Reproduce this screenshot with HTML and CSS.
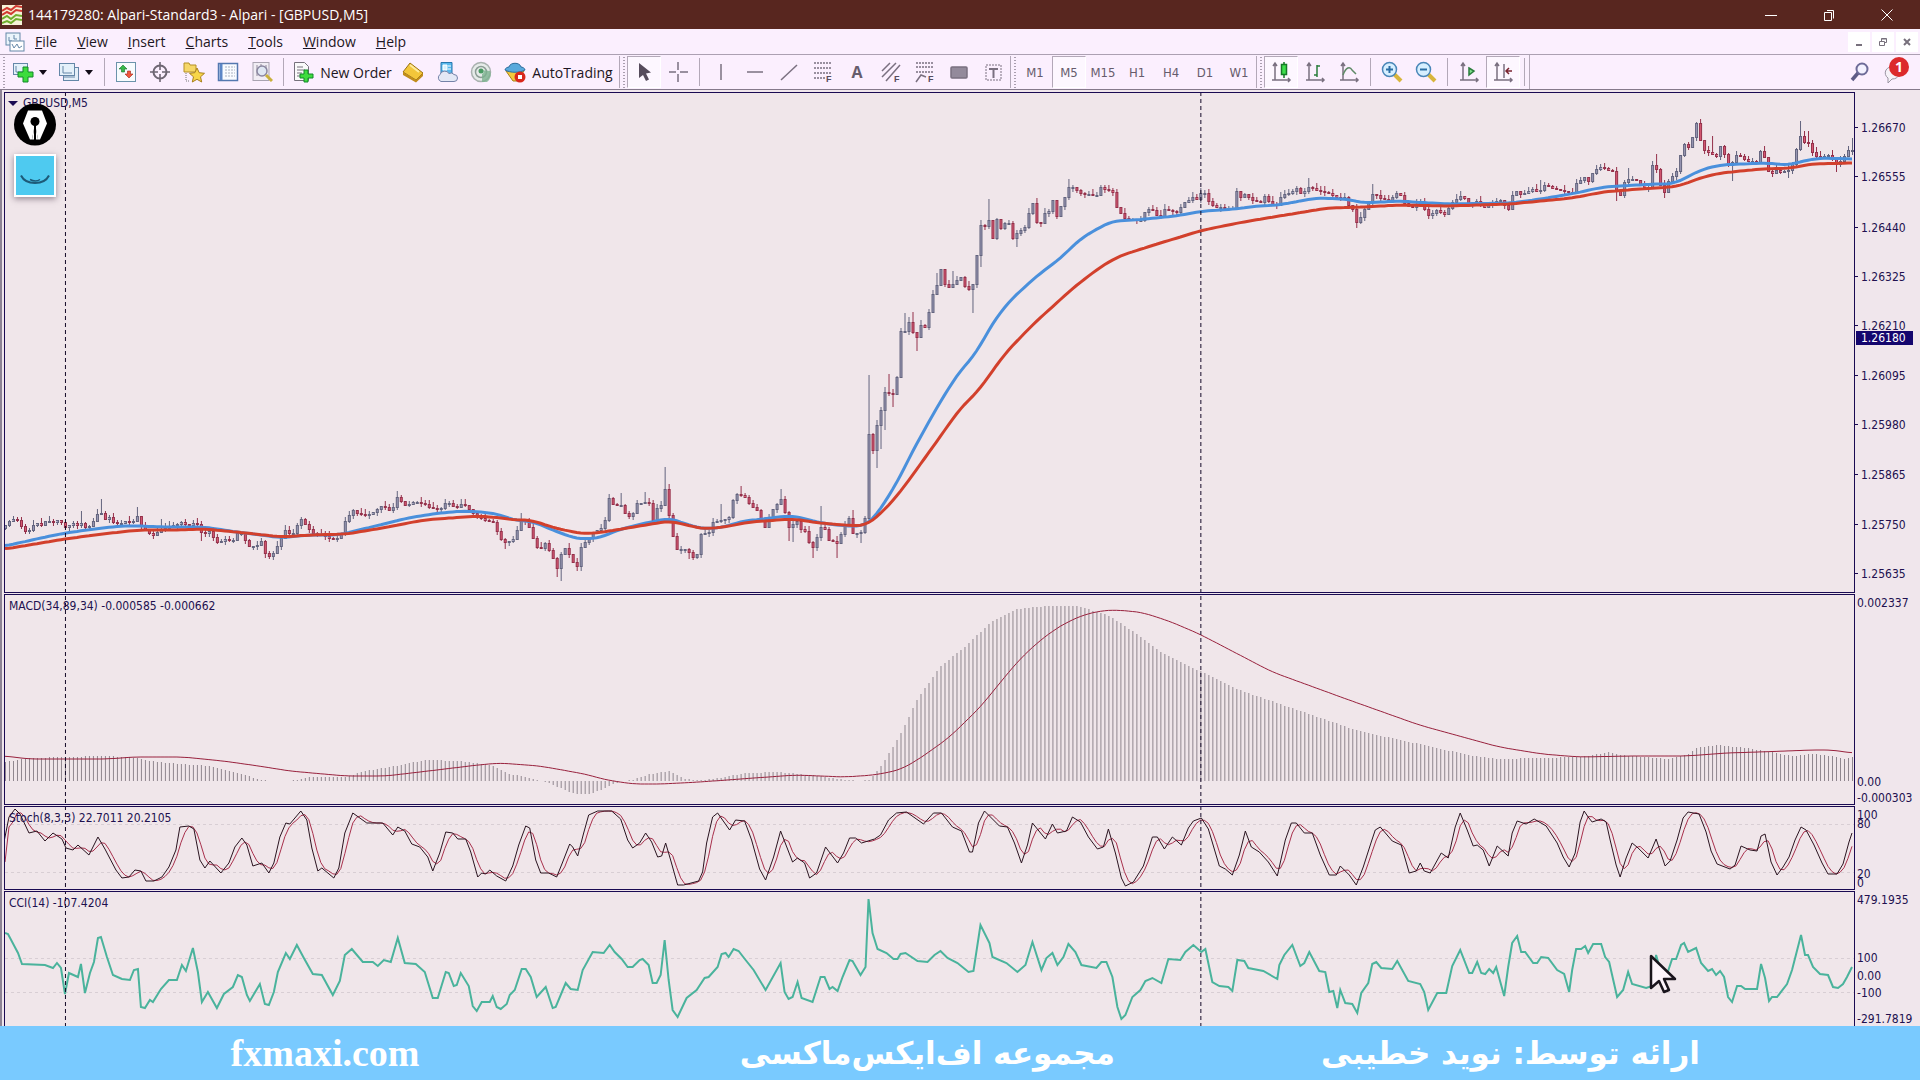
FILE: index.html
```html
<!DOCTYPE html>
<html lang="en">
<head>
    <meta charset="UTF-8">
    <meta name="viewport" content="width=device-width, initial-scale=1.0">
    <title>144179280: Alpari-Standard3 - Alpari - [GBPUSD,M5]</title>
    <link rel="stylesheet" href="styles.css">
</head>
<body>
    <header class="titlebar">
        <svg class="app-icon" viewBox="0 0 20 20"><rect width="20" height="20" fill="#f6f3d8"/><path d="M0 6l5-3 4 2 5-4 6 1M0 10l5-3 4 2 5-4 6 1" stroke="#d23a32" stroke-width="2" fill="none"/><path d="M0 14l5-3 4 3 5-4 6 1M0 18l5-2 4 2 5-4 6 1" stroke="#6fae2c" stroke-width="2" fill="none"/></svg>
        <h1>144179280: Alpari-Standard3 - Alpari - [GBPUSD,M5]</h1>
        <div class="win-btns">
            <button aria-label="Minimize"><svg viewBox="0 0 14 14"><path d="M1 7.500h12"/></svg></button>
            <button aria-label="Restore"><svg viewBox="0 0 14 14"><path d="M2.500 4.500h7v8h-7zM5 2.500h6.500v8"/></svg></button>
            <button aria-label="Close"><svg viewBox="0 0 14 14"><path d="M1.500 1.500l11 11M12.500 1.500l-11 11"/></svg></button>
        </div>
    </header>

    <nav class="menubar">
        <svg class="menu-icon" viewBox="0 0 20 20"><rect x="1" y="1" width="14" height="12" fill="#eaf4fb" stroke="#6487a8"/><path d="M4 5v4h3M9 3v4h3" stroke="#6487a8" fill="none"/><rect x="5" y="9" width="14" height="10" fill="#fff" stroke="#6487a8"/><path d="M7 12l2 4 3-4 2 4 3-2" stroke="#6487a8" fill="none"/></svg>
        <button><u>F</u>ile</button>
        <button><u>V</u>iew</button>
        <button><u>I</u>nsert</button>
        <button><u>C</u>harts</button>
        <button><u>T</u>ools</button>
        <button><u>W</u>indow</button>
        <button><u>H</u>elp</button>
        <div class="mdi-btns">
            <button aria-label="Minimize chart"><svg viewBox="0 0 10 10"><path d="M2 8h6" stroke-width="2"/></svg></button>
            <button aria-label="Restore chart"><svg viewBox="0 0 10 10"><path d="M1.500 4.500h5v4h-5zM3.500 4V1.500h5v4H7M3.500 2h5"/></svg></button>
            <button aria-label="Close chart"><svg viewBox="0 0 10 10"><path d="M2 2l6 6M8 2l-6 6" stroke-width="2"/></svg></button>
        </div>
    </nav>

    <div class="toolbar">
        <span class="grip first"></span>
        <button class="tool drop" aria-label="New chart"><svg viewBox="0 0 22 22"><rect x="1.500" y="2.500" width="14" height="11" fill="#e4f1fa" stroke="#6487a8"/><path d="M4 5v6h8" stroke="#6487a8" fill="none"/><path d="M11 6h5v5h5v5h-5v5h-5v-5H6v-5h5z" fill="#3ddc3d" stroke="#12882a"/></svg><i class="caret"></i></button>
        <button class="tool drop" aria-label="Profiles"><svg viewBox="0 0 22 22"><rect x="5.500" y="6.500" width="15" height="13" fill="#e4eff8" stroke="#6487a8"/><rect x="1.500" y="2.500" width="15" height="12" fill="#e4f1fa" stroke="#6487a8"/><path d="M5 5v7h9M6 16h11" stroke="#6487a8" fill="none"/></svg><i class="caret"></i></button>
        <span class="sep"></span>
        <button class="tool" aria-label="Market Watch"><svg viewBox="0 0 22 22"><rect x="1.500" y="1.500" width="19" height="19" fill="#f7fbfd" stroke="#6c93ab"/><path d="M8 4l4 4H9.500v3h-3V8H4z" fill="#37b84a" stroke="#17702a" stroke-width=".6"/><path d="M14 17l-4-4h2.500v-3h3v3H18z" fill="#f0573d" stroke="#a12418" stroke-width=".6"/></svg></button>
        <button class="tool" aria-label="Data Window"><svg viewBox="0 0 22 22"><circle cx="11" cy="11" r="6.500" fill="none" stroke="#6e6773" stroke-width="2"/><path d="M11 1v8M11 13v8M1 11h8M13 11h8" stroke="#6e6773" stroke-width="1.600"/></svg></button>
        <button class="tool" aria-label="Navigator"><svg viewBox="0 0 22 22"><path d="M1 2h5l1 2h6v7H1z" fill="#f6d768" stroke="#b38f27"/><path d="M3 12v8h4" stroke="#777" stroke-dasharray="1 1" fill="none"/><path d="M14 7l2.200 4.700 5.300.6-4 3.500 1.200 5.200-4.700-2.700L9.300 21l1.200-5.200-4-3.500 5.300-.6z" fill="#f8d648" stroke="#a8801c"/></svg></button>
        <button class="tool" aria-label="Terminal"><svg viewBox="0 0 22 22"><rect x="1.500" y="2.500" width="19" height="17" fill="#f8fbff" stroke="#5478b0" stroke-width="1.500"/><path d="M4 3v16" stroke="#5b86c6" stroke-width="3"/><path d="M8 6h10M8 9h10M8 12h10M8 15h10" stroke="#aab2c0" stroke-dasharray="2 1"/></svg></button>
        <button class="tool" aria-label="Strategy Tester"><svg viewBox="0 0 22 22"><rect x="2" y="1.500" width="16" height="18" fill="#f1edf4" stroke="#a9a3b1"/><path d="M6 4v11M10 3v5M15 4v6" stroke="#928c9b"/><circle cx="11" cy="10" r="5" fill="#dfe7f3" stroke="#8a86a0" stroke-width="1.500"/><path d="M15 14l6 6" stroke="#c9b03a" stroke-width="3"/></svg></button>
        <span class="sep"></span>
        <button class="tool wide order"><svg viewBox="0 0 22 22"><path d="M2.500 1.500h10l4 4v14h-14z" fill="#fafafa" stroke="#76717c"/><path d="M5 6h6M5 9h8M5 12h5M5 15h5" stroke="#76717c"/><path d="M12 9h4v4h5v4h-5v4h-4v-4H8v-4h4z" fill="#3ddc3d" stroke="#12882a"/></svg>New Order</button>
        <button class="tool" aria-label="MetaEditor"><svg viewBox="0 0 22 22"><path d="M8 2l13 10-7 7L1 11z" fill="#f3c63a" stroke="#9a7214"/><path d="M1 11l13 8v2.500L1 14zM14 19l7-7v3l-7 6.500z" fill="#c18d1b"/><path d="M8 4l9 7" stroke="#fdeb9b" stroke-width="2"/></svg></button>
        <button class="tool" aria-label="Cloud"><svg viewBox="0 0 22 22"><path d="M5 1.500h11v12H5z" fill="#59b8ec" stroke="#2677ae"/><path d="M7 4h4v5H7zM12 5h3M12 8h3" fill="#d7f0fc" stroke="#fff"/><path d="M5 20.500a4 4 0 0 1-1-7 5 5 0 0 1 9-1 4 4 0 0 1 5 1 3.500 3.500 0 0 1 0 7z" fill="#e3e8f5" stroke="#7482a8"/></svg></button>
        <button class="tool" aria-label="Signals"><svg viewBox="0 0 22 22"><circle cx="11" cy="11" r="9.500" fill="#e6ebe9" stroke="#a9b1af" stroke-width="1.500"/><circle cx="11" cy="11" r="5.500" fill="none" stroke="#8d9c96" stroke-width="1.500"/><path d="M11 9a2 2 0 0 1 1 4v8h5a9 9 0 0 0 3-11" fill="#7cb28e" opacity=".8"/><circle cx="11" cy="10" r="2.500" fill="#4a9b63"/></svg></button>
        <button class="tool wide auto"><svg viewBox="0 0 22 22"><path d="M2 10h18l-7 10H9z" fill="#f4c93c" stroke="#a7801b"/><path d="M1 9c0-2 3-3 4-3 1-5 11-5 12 0 1 0 4 1 4 3-5 3-15 3-20 0z" fill="#58a9dc" stroke="#2c6c9b"/><circle cx="16" cy="16" r="5.500" fill="#d9271c"/><rect x="14" y="14" width="4" height="4" fill="#fff"/></svg>AutoTrading</button>
        <span class="grip"></span>
        <button class="tool on" aria-label="Cursor"><svg viewBox="0 0 22 22"><path d="M6 2v15l4-3 3 6 3-1.500-3-6 5-1z" fill="#564c5c"/></svg></button>
        <button class="tool" aria-label="Crosshair"><svg class="line" viewBox="0 0 22 22"><path d="M11 1v8M11 13v8M2 11h7M13 11h8"/></svg></button>
        <span class="sep"></span>
        <button class="tool" aria-label="Vertical line"><svg class="line" viewBox="0 0 22 22"><path d="M11 3v16"/></svg></button>
        <button class="tool" aria-label="Horizontal line"><svg class="line" viewBox="0 0 22 22"><path d="M3 11h16"/></svg></button>
        <button class="tool" aria-label="Trendline"><svg class="line" viewBox="0 0 22 22"><path d="M3 19L19 4"/></svg></button>
        <button class="tool" aria-label="Fibonacci retracement"><svg class="line" viewBox="0 0 22 22"><path d="M2 2h18M2 7h18M2 12h18M2 17h11" stroke-dasharray="2 1"/><text x="14" y="21">F</text></svg></button>
        <button class="tool letter" aria-label="Text">A</button>
        <button class="tool" aria-label="Channel"><svg class="line" viewBox="0 0 22 22"><path d="M2 10l8-8M2 16L16 2M6 20L20 4"/><text x="14" y="21">F</text></svg></button>
        <button class="tool" aria-label="Fibonacci fan"><svg class="line" viewBox="0 0 22 22"><path d="M2 2h18M2 6h18M2 11h18" stroke-dasharray="2 1"/><path d="M2 21l5-7 5 2"/><text x="14" y="21">F</text></svg></button>
        <button class="tool" aria-label="Rectangle"><svg class="line" viewBox="0 0 22 22"><rect x="3" y="6" width="16" height="11" rx="1" fill="#938a9b"/></svg></button>
        <button class="tool" aria-label="Text label"><svg class="line" viewBox="0 0 22 22"><rect x="4" y="4" width="15" height="15" fill="none" stroke-width="1" stroke-dasharray="2 1"/><path d="M7 8h9M11.500 8v9" stroke-width="2"/></svg></button>
        <span class="grip"></span>
        <button class="tool tf">M1</button>
        <button class="tool tf on">M5</button>
        <button class="tool tf">M15</button>
        <button class="tool tf">H1</button>
        <button class="tool tf">H4</button>
        <button class="tool tf">D1</button>
        <button class="tool tf">W1</button>
        <span class="grip"></span>
        <button class="tool on" aria-label="Candlesticks"><svg class="line" viewBox="0 0 22 22"><path d="M5 2v17h15M3 5l2-3 2 3M18 17l2 2-2 2M2 19h3"/><path d="M14 1v16" stroke="#157a26"/><rect x="11.500" y="3.500" width="5" height="10" fill="#3ede4c" stroke="#157a26"/></svg></button>
        <button class="tool" aria-label="Bar chart"><svg class="line" viewBox="0 0 22 22"><path d="M5 2v17h15M3 5l2-3 2 3M18 17l2 2-2 2M2 19h3"/><path d="M13 4v12M13 5h3M10 14h3" stroke="#2b7d3d"/></svg></button>
        <button class="tool" aria-label="Line chart"><svg class="line" viewBox="0 0 22 22"><path d="M5 2v17h15M3 5l2-3 2 3M18 17l2 2-2 2M2 19h3"/><path d="M5 14c3-8 7-9 9-5l4 4" fill="none" stroke="#5f8a67"/></svg></button>
        <span class="sep"></span>
        <button class="tool" aria-label="Zoom in"><svg viewBox="0 0 22 22"><path d="M13 13l7 7" stroke="#d8b53c" stroke-width="4"/><circle cx="8.500" cy="8.500" r="7" fill="#d6efff" stroke="#4a86b8" stroke-width="1.500"/><path d="M5 8.500h7M8.500 5v7" stroke="#2b6ea5" stroke-width="2"/></svg></button>
        <button class="tool" aria-label="Zoom out"><svg viewBox="0 0 22 22"><path d="M13 13l7 7" stroke="#d8b53c" stroke-width="4"/><circle cx="8.500" cy="8.500" r="7" fill="#d6efff" stroke="#4a86b8" stroke-width="1.500"/><path d="M5 8.500h7" stroke="#2b6ea5" stroke-width="2"/></svg></button>
        <span class="sep"></span>
        <button class="tool" aria-label="Auto scroll"><svg class="line" viewBox="0 0 22 22"><path d="M5 2v17h15M3 5l2-3 2 3M18 17l2 2-2 2M2 19h3"/><path d="M11 7l5 3-5 4z" fill="#7ee08a" stroke="#2b7d3d"/></svg></button>
        <button class="tool on" aria-label="Chart shift"><svg class="line" viewBox="0 0 22 22"><path d="M5 2v17h15M3 5l2-3 2 3M18 17l2 2-2 2M2 19h3"/><path d="M12 3v14"/><path d="M20 10h-6M17 7l-3 3 3 3" stroke="#7a2430"/></svg></button>
        <span class="sep"></span>
        <span class="rule"></span>
        <div class="tool-right">
            <button class="tool" aria-label="Search"><svg viewBox="0 0 22 22"><path d="M9 12l-6 7" stroke="#5e5b86" stroke-width="3.500"/><circle cx="13" cy="8" r="5.500" fill="#f3f1ff" stroke="#6d6b98" stroke-width="2"/></svg></button>
            <button class="tool chat" aria-label="Messages"><svg viewBox="0 0 22 22"><path d="M3 9a7 6 0 1 1 6 9l-4 4v-5a6 6 0 0 1-2-8z" fill="#f6f2f8" stroke="#9a94a2"/></svg><span class="badge">1</span></button>
        </div>
    </div>

    <main class="workspace">
        <section class="panel">
            <div class="plot">
                <svg id="price" viewBox="5 93 1850 499" preserveAspectRatio="none"></svg>
                <div class="caption symbol"><i class="caret"></i>GBPUSD,M5</div>
            </div>
            <div class="axis" id="priceAxis"></div>
        </section>
        <section class="panel">
            <div class="plot">
                <svg id="macd" viewBox="5 595 1850 209" preserveAspectRatio="none"></svg>
                <div class="caption">MACD(34,89,34) -0.000585 -0.000662</div>
            </div>
            <div class="axis" id="macdAxis"></div>
        </section>
        <section class="panel">
            <div class="plot">
                <svg id="stoch" viewBox="5 807 1850 82" preserveAspectRatio="none"></svg>
                <div class="caption">Stoch(8,3,3) 22.7011 20.2105</div>
            </div>
            <div class="axis" id="stochAxis"></div>
        </section>
        <section class="panel last">
            <div class="plot">
                <svg id="cci" viewBox="5 892 1850 134" preserveAspectRatio="none"></svg>
                <div class="caption">CCI(14) -107.4204</div>
            </div>
            <div class="axis" id="cciAxis"></div>
        </section>

        <div class="float-tools">
            <button class="pen" aria-label="Pen"><svg viewBox="0 0 42 42"><circle cx="21" cy="21" r="21" fill="#000"/><path d="M14 7h14l5 13-7 16h-2L21 20l-3 16h-2L9 20z" fill="#fff"/><path d="M18 36l3-16 3 16z" fill="#fff"/><circle cx="21" cy="18" r="4.500" fill="#000"/><path d="M21 20v17" stroke="#000" stroke-width="2"/></svg></button>
            <button class="smile" aria-label="Board"><svg viewBox="0 0 38 38"><path d="M5 19c5 10 23 10 28 0" fill="none" stroke="#1d5a78" stroke-width="2"/><path d="M14 23c4 2 7 2 10 0" fill="none" stroke="#1d5a78" stroke-width="1.500"/></svg></button>
        </div>
        <svg class="pointer" viewBox="0 0 28 40"><path d="M2 2v32l8-7 5 11 5-2-5-11h11z" fill="#fdf4fb" stroke="#1a141c" stroke-width="2.500" stroke-linejoin="round"/></svg>
    </main>

    <footer class="banner">
        <a href="#">fxmaxi.com</a>
        <p lang="fa" dir="rtl">مجموعه اف‌ایکس‌ماکسی</p>
        <p lang="fa" dir="rtl">ارائه توسط: نوید خطیبی</p>
    </footer>

    <script src="chart.js"></script>
</body>
</html>
```
FILE: styles.css
```css
* {
    box-sizing: border-box;
}
body {
    margin: 0;
    height: 100vh;
    display: flex;
    flex-direction: column;
    overflow: hidden;
    background: #fbeffe;
    color: #1d1622;
    font-family: "Open Sans", "Noto Sans", sans-serif;
    font-size: 14px;
}
button {
    font: inherit;
    color: inherit;
    background: none;
    border: none;
    padding: 0;
}

/* title bar */
.titlebar {
    display: flex;
    align-items: center;
    height: 29px;
    padding: 0 4px 0 2px;
    background: #58261f;
    color: #fff;
}
.titlebar h1 {
    margin: 0 auto 0 6px;
    font-size: 14px;
    font-weight: normal;
}
.app-icon {
    width: 20px;
    height: 20px;
}
.win-btns {
    display: flex;
}
.win-btns button {
    width: 58px;
    height: 28px;
}
.win-btns svg {
    width: 14px;
    height: 14px;
    fill: none;
    stroke: #fff;
    display: block;
    margin: auto;
}

/* menu */
.menubar {
    display: flex;
    align-items: center;
    height: 26px;
    padding: 0 2px 0 5px;
    border-bottom: 1px solid #aca0b2;
}
.menu-icon {
    width: 20px;
    height: 20px;
}
.menubar > button {
    padding: 0 10px;
}
.mdi-btns {
    display: flex;
    gap: 2px;
    margin-left: auto;
}
.mdi-btns button {
    width: 22px;
    height: 20px;
    background: #fff;
}
.mdi-btns svg {
    width: 10px;
    height: 10px;
    display: block;
    margin: auto;
    fill: none;
    stroke: #77707c;
}

/* toolbar */
.toolbar {
    display: flex;
    align-items: center;
    height: 35px;
    border-bottom: 1px solid #85798b;
}
.tool {
    width: 34px;
    height: 32px;
    display: flex;
    flex: none;
    align-items: center;
    justify-content: center;
}
.tool svg {
    width: 22px;
    height: 22px;
    flex: none;
}
.tool.on {
    border: 1px solid #b3a8b8;
    border-right-color: #fff;
    border-bottom-color: #fff;
    background: #fdf7ff;
}
.tool.drop {
    width: 46px;
    gap: 5px;
    padding-right: 3px;
}
.tool.wide {
    gap: 6px;
}
.tool.order {
    width: 108px;
}
.tool.auto {
    width: 121px;
}
.tool.tf {
    font-family: "DejaVu Sans Condensed", "DejaVu Sans", sans-serif;
    font-size: 13px;
    color: #665c6c;
}
.tool.letter {
    font-size: 16px;
    font-weight: bold;
    color: #665c6c;
}
.line {
    stroke: #7a7080;
    stroke-width: 1.5;
    fill: none;
    overflow: visible;
}
.line text {
    font: bold 9px "Liberation Sans", sans-serif;
    fill: #564c5c;
    stroke: none;
}
.caret {
    width: 0;
    height: 0;
    border: 4px solid transparent;
    border-top: 5px solid #120b18;
    border-bottom: none;
}
.sep {
    width: 1px;
    height: 28px;
    margin: 0 4px;
    background: #b3a8b8;
}
.rule {
    width: 1px;
    height: 34px;
    background: #b3a8b8;
}
.grip {
    width: 8px;
    height: 32px;
    border-left: 1px solid #b3a8b8;
    background: radial-gradient(#a99eae 1px, transparent 1px) 1px 0 / 5px 3px repeat-y;
}
.grip.first {
    border-left: none;
}
.tool-right {
    display: flex;
    margin-left: auto;
    padding-right: 9px;
}
.chat {
    position: relative;
}
.badge {
    position: absolute;
    top: 1px;
    left: 12px;
    width: 20px;
    height: 20px;
    border-radius: 50%;
    background: #dc2a2c;
    color: #fff;
    font-size: 14px;
    line-height: 20px;
    font-weight: bold;
    text-align: center;
}

/* charts */
.workspace {
    position: relative;
    flex: 1;
    min-height: 0;
    display: grid;
    grid-template-rows: minmax(0, 501fr) minmax(0, 211fr) minmax(0, 84fr) minmax(0, 135fr);
    gap: 1px;
    padding: 2px 0 0 2px;
    border-left: 2px solid #8d8394;
    background: #f0e6ec;
}
.panel {
    display: flex;
    min-height: 0;
    font-family: "DejaVu Sans Condensed", "DejaVu Sans", sans-serif;
    font-size: 12px;
    line-height: 16px;
    color: #21104f;
}
.plot {
    position: relative;
    flex: 1;
    border: 1px solid #1a0a52;
    background: #f0e6ea;
}
.last .plot {
    border-bottom: none;
}
.plot > svg {
    position: absolute;
    width: 100%;
    height: 100%;
}
.plot path,
.plot line {
    fill: none;
    vector-effect: non-scaling-stroke;
}
.caption {
    position: absolute;
    top: 3px;
    left: 4px;
}
.symbol {
    display: flex;
    align-items: center;
    top: 2px;
    left: 3px;
    gap: 5px;
}
.symbol .caret {
    border-width: 5px 5px 0;
    border-top-color: #1a0a52;
}
.axis {
    position: relative;
    width: 65px;
}
.tick {
    position: absolute;
    left: 2px;
    margin-top: 1px;
    transform: translateY(-50%);
}
#priceAxis .tick {
    left: 0;
    padding-left: 6px;
}
#priceAxis .tick::before {
    content: "";
    position: absolute;
    left: 0;
    top: 7px;
    width: 3px;
    border-top: 1px solid #1a0a52;
}
#priceAxis .tick.now {
    left: 1px;
    width: 57px;
    padding-left: 5px;
    line-height: 14px;
    margin-top: 0;
    background: #14066e;
    color: #fff;
}
.bull { stroke: #63647e; fill: #9a98b4; }
.bear { stroke: #94304a; fill: #d85a74; }
.plot .ma-fast { stroke: #4a90dc; stroke-width: 3; }
.plot .ma-slow { stroke: #d2402c; stroke-width: 3; }
.hist { stroke: #8f868e; }
.signal { stroke: #98203c; }
.k { stroke: #2a1420; }
.d { stroke: #a8304c; }
.plot .cci { stroke: #4ab39c; stroke-width: 2; }
.level { stroke: #d8ced4; stroke-dasharray: 3 3; }
.day { stroke: #140a28; stroke-dasharray: 4 3; }

/* things lying over the chart */
.float-tools {
    position: absolute;
    top: 13px;
    left: 12px;
    display: flex;
    flex-direction: column;
    gap: 8px;
}
.pen,
.smile {
    width: 42px;
    height: 43px;
}
.pen svg,
.smile svg {
    display: block;
    width: 100%;
    height: 100%;
}
.smile {
    border: 2px solid #fff;
    background: #4ecaf0;
    box-shadow: 0 2px 6px rgba(60, 40, 60, 0.5);
}
.pointer {
    position: absolute;
    left: 86%;
    top: 92%;
    width: 28px;
    height: 40px;
    margin: 3px 0 0 -2px;
}

/* banner */
.banner {
    display: grid;
    grid-template-columns: 34fr 29fr 32fr 5fr;
    align-items: center;
    justify-items: center;
    height: 54px;
    padding-right: 8px;
    background: #79caff;
    color: #fff;
    font-weight: bold;
}
.banner a {
    color: inherit;
    text-decoration: none;
    font-family: "Liberation Serif", serif;
    font-size: 38px;
    line-height: 54px;
}
.banner p {
    margin: 0;
    font-family: "DejaVu Sans", sans-serif;
    font-size: 31px;
    line-height: 52px;
    white-space: nowrap;
}
```
FILE: chart.js
```js
const NS = "http://www.w3.org/2000/svg";
const STEP = 4;
const FIRST = 5;
const LAST = 1853;

// every series is a list of x,y points; values between them are interpolated
const closes = "5,525 9,521 15,518 19,522 24,531 29,530 33,525 38,523 42,526 46,519 51,523 57,520 62,522 65,527 73,523 78,526 82,522 86,528 90,525 94,520 98,512 101,513 105,519 110,517 114,523 122,523 127,520 131,524 137,516 142,528 146,531 154,535 161,529 173,525 182,522 188,525 194,522 199,525 202,536 208,530 214,538 218,543 224,539 233,540 239,530 245,540 249,546 257,545 261,541 265,553 270,557 274,552 278,544 286,528 291,537 296,527 300,518 306,525 312,533 327,537 334,539 340,536 346,518 353,510 359,514 367,515 373,512 382,505 390,511 394,505 398,494 402,503 406,505 412,502 424,503 429,507 437,509 443,508 446,501 451,505 457,507 463,503 469,509 475,515 486,520 495,522 498,536 506,543 514,538 522,517 529,527 535,544 539,550 545,543 551,553 557,568 562,550 567,547 571,560 578,567 582,540 586,543 592,532 602,527 605,520 609,498 614,505 621,505 627,517 633,513 637,503 645,502 649,503 653,520 657,508 661,505 665,489 669,515 673,536 677,549 686,549 693,557 697,554 701,534 709,532 713,522 721,520 729,517 734,496 737,494 746,497 750,505 757,510 762,520 766,529 770,515 774,507 782,498 786,517 789,527 795,523 799,518 802,535 805,531 810,545 813,547 818,535 821,527 826,529 830,543 834,540 837,543 842,532 849,518 853,533 861,532 865,518 869,434 873,450 877,425 881,410 885,392 893,394 897,377 901,331 905,331 909,322 914,335 917,337 921,325 926,328 929,312 934,289 937,285 941,269 946,288 950,287 954,283 961,277 966,288 970,289 974,282 977,255 981,225 986,226 989,220 993,238 997,219 1001,228 1006,222 1009,223 1013,238 1017,233 1025,227 1029,213 1033,203 1037,222 1041,223 1045,213 1049,211 1053,200 1057,216 1061,206 1066,195 1070,184 1077,190 1082,194 1097,195 1101,187 1113,192 1117,207 1122,215 1126,219 1142,220 1146,209 1153,210 1158,216 1162,216 1165,209 1177,212 1185,202 1193,197 1197,199 1201,193 1206,193 1210,203 1215,207 1235,208 1237,191 1242,199 1246,192 1251,200 1261,202 1266,195 1270,203 1277,205 1282,195 1289,193 1297,188 1302,194 1310,186 1318,190 1329,193 1338,198 1345,197 1350,207 1354,210 1358,226 1361,217 1366,207 1374,192 1379,197 1390,200 1399,191 1404,202 1411,208 1421,202 1429,215 1437,210 1445,214 1452,203 1463,194 1470,207 1478,200 1483,208 1490,203 1501,200 1509,209 1514,192 1518,190 1522,195 1532,189 1539,192 1545,185 1559,190 1573,193 1577,183 1585,177 1590,182 1594,170 1602,166 1609,170 1613,171 1618,196 1622,195 1626,178 1638,180 1642,187 1650,187 1654,158 1658,173 1663,193 1667,190 1671,172 1674,178 1678,168 1682,150 1686,142 1690,148 1694,133 1698,119 1702,147 1706,151 1718,156 1722,143 1726,157 1730,167 1734,160 1738,153 1746,160 1758,162 1762,147 1766,160 1770,175 1777,170 1782,172 1790,170 1794,162 1798,145 1802,133 1806,145 1810,142 1814,155 1821,157 1830,155 1838,165 1842,160 1850,149 1854,150";
const fast = "5,546 41,538 65,533 102,528 122,526 141,526 163,527 204,527 237,532 261,535 282,538 306,535 339,535 363,529 388,523 408,518 433,514 461,511 482,512 498,514 514,520 535,522 555,531 578,539 600,538 618,530 646,523 670,518 686,524 704,529 725,527 743,521 764,519 786,516 800,517 821,523 846,526 866,526 877,515 898,482 911,455 936,410 951,385 963,368 978,352 988,331 1008,303 1035,278 1065,255 1076,243 1090,233 1113,221 1136,220 1176,216 1204,211 1236,209 1258,206 1279,205 1317,198 1347,199 1365,203 1400,201 1414,202 1449,204 1511,203 1542,199 1577,193 1604,187 1656,184 1673,184 1687,178 1701,170 1721,165 1766,163 1790,165 1804,161 1821,158 1855,159";
const slow = "5,549 65,539 102,534 139,530 176,530 204,529 237,532 282,537 310,535 347,534 388,527 424,520 478,516 502,518 514,520 531,520 555,528 584,534 604,532 640,526 670,521 704,529 725,527 750,522 793,519 821,523 843,525 866,526 882,513 900,493 929,453 961,408 978,392 1006,353 1035,323 1076,286 1101,267 1120,256 1161,243 1204,230 1244,222 1286,215 1329,208 1365,207 1400,205 1449,206 1511,204 1573,198 1604,192 1639,189 1673,187 1683,185 1701,178 1721,173 1763,169 1794,168 1811,164 1855,163";
const hist = "5,762 30,758 65,757 100,756 130,757 150,761 180,764 210,766 240,774 262,780 270,781 290,781 310,777 345,777 365,771 400,765 425,760 460,761 490,765 510,774 535,779 548,783 560,788 575,794 590,794 600,790 612,784 622,781 632,780 650,774 668,771 685,779 700,780 720,778 745,773 780,772 810,775 840,779 860,781 869,780 875,774 882,765 900,735 918,698 940,667 967,645 992,621 1016,609 1047,606 1078,606 1108,615 1139,635 1163,653 1200,671 1237,689 1298,710 1359,731 1420,744 1469,755 1500,759 1540,758 1580,757 1600,754 1610,752 1623,755 1667,759 1687,755 1697,748 1717,745 1747,748 1777,753 1793,756 1813,754 1833,756 1843,759 1853,757";
const signal = "5,756 29,759 107,759 134,757 183,757 223,761 259,766 290,771 346,776 386,776 437,770 478,765 500,763 540,766 585,774 607,780 634,784 661,784 700,782 741,779 796,775 845,777 875,775 900,770 918,760 949,738 980,708 1016,664 1034,646 1053,631 1068,622 1084,615 1100,611 1114,610 1130,611 1145,613 1172,622 1200,634 1273,672 1347,699 1420,725 1500,747 1543,754 1580,757 1633,756 1687,756 1727,753 1760,752 1813,750 1833,750 1853,753";
const stochK = "4,842 9,817 15,809 20,814 29,833 37,831 45,841 53,833 62,839 66,848 73,850 78,845 89,855 98,837 105,849 116,870 122,878 129,877 135,870 141,871 146,881 154,881 162,877 169,867 176,850 180,827 189,826 194,829 200,860 205,868 210,861 221,873 229,863 235,847 242,838 247,845 253,866 262,863 269,873 274,863 280,837 286,823 290,824 301,811 307,820 312,848 318,871 322,868 334,878 339,868 345,833 353,813 367,823 383,823 393,835 398,827 405,831 412,844 420,847 428,857 433,871 440,853 446,832 453,833 458,839 466,839 471,852 478,877 482,873 486,874 490,870 497,876 506,881 513,866 519,845 526,826 530,828 536,860 541,873 549,873 557,877 563,862 570,844 573,847 578,856 584,833 589,815 598,811 612,811 621,819 628,840 633,848 640,843 646,833 652,842 658,857 662,856 666,843 671,860 678,885 684,885 699,881 703,872 707,843 713,817 718,813 730,830 736,820 745,821 752,840 760,869 766,880 774,857 781,831 793,862 798,858 805,863 810,878 817,873 826,847 838,863 844,853 850,838 856,838 862,843 875,839 881,835 889,820 897,813 907,812 924,824 934,813 942,813 953,827 962,831 970,852 973,852 979,823 985,811 992,818 1000,826 1008,827 1015,843 1022,863 1028,845 1033,823 1046,839 1053,824 1058,833 1067,831 1073,817 1081,822 1089,837 1098,849 1104,847 1109,829 1116,853 1122,878 1126,886 1134,882 1144,866 1153,837 1158,837 1165,849 1173,837 1182,845 1189,828 1194,821 1202,818 1209,829 1220,866 1226,869 1233,875 1240,855 1246,831 1252,847 1260,852 1269,862 1278,876 1286,840 1292,823 1297,823 1305,833 1313,833 1321,855 1330,875 1337,875 1341,866 1350,875 1357,885 1364,867 1372,842 1376,830 1381,827 1393,841 1402,845 1410,873 1417,871 1421,863 1425,871 1431,873 1442,853 1449,858 1456,827 1461,813 1468,830 1474,846 1478,845 1484,850 1490,866 1498,846 1509,856 1513,833 1518,821 1527,824 1535,819 1547,826 1558,843 1564,857 1570,867 1576,853 1581,822 1585,811 1589,817 1593,822 1602,819 1607,822 1611,840 1617,865 1621,877 1627,858 1633,843 1639,848 1649,858 1657,839 1666,866 1671,861 1678,840 1684,818 1689,812 1700,814 1707,832 1712,851 1718,864 1731,869 1736,865 1742,846 1751,850 1758,851 1762,836 1766,834 1772,862 1778,875 1784,867 1790,857 1796,840 1802,827 1807,830 1815,845 1823,863 1829,874 1838,874 1844,864 1850,842 1853,833";
const cci = "5,933 8,934 18,953 22,964 45,965 53,968 57,963 61,968 65,994 69,973 78,977 81,964 85,993 90,973 94,962 98,938 101,937 107,957 113,975 122,979 130,980 134,970 138,969 141,1007 145,1008 150,1000 153,1002 161,989 169,980 177,980 182,965 186,971 193,948 198,972 202,1002 208,992 217,1008 224,994 233,987 238,975 242,977 247,995 250,1001 260,984 265,1004 269,1005 274,992 278,972 286,953 290,959 297,945 304,958 313,974 322,975 333,995 340,981 345,955 352,949 363,962 373,962 378,966 384,960 391,962 398,938 405,963 416,964 425,972 433,998 438,998 446,972 449,973 454,986 457,985 461,973 469,986 473,1006 477,1011 482,1002 490,1002 493,996 497,1007 501,1009 507,1004 510,995 515,990 522,969 526,969 531,977 537,997 546,987 553,1008 556,1007 566,983 571,989 578,990 583,970 593,952 604,953 610,945 615,952 622,959 628,967 633,967 640,960 643,959 649,965 653,983 657,983 661,975 665,940 669,980 673,1010 678,1017 687,998 697,990 705,978 709,977 718,967 722,954 726,953 729,957 734,949 739,951 746,960 754,970 766,990 781,963 785,992 789,999 793,997 798,982 802,998 813,1002 821,977 825,977 830,989 833,987 838,991 843,977 850,960 853,961 861,975 866,967 869,899 873,933 878,949 887,953 894,959 898,959 901,954 906,953 918,961 928,962 935,955 941,951 948,958 958,963 969,972 974,971 981,925 990,943 993,957 1007,963 1018,972 1026,965 1033,942 1042,970 1047,958 1053,953 1058,965 1064,957 1069,944 1076,952 1082,965 1097,968 1102,962 1107,962 1113,977 1118,1007 1122,1019 1126,1015 1133,997 1141,990 1146,981 1153,978 1162,983 1169,959 1181,960 1186,952 1194,945 1202,952 1206,949 1213,982 1220,986 1229,987 1233,991 1238,960 1245,961 1249,968 1264,971 1278,979 1280,965 1285,955 1293,945 1301,966 1305,963 1310,952 1320,971 1326,972 1330,992 1334,991 1338,1008 1341,990 1346,1003 1353,1004 1358,1013 1362,993 1369,983 1373,964 1377,962 1382,968 1393,969 1398,961 1409,981 1421,984 1425,992 1429,1010 1438,993 1447,993 1453,966 1461,950 1470,973 1473,973 1478,962 1482,973 1486,974 1490,969 1494,973 1497,967 1505,996 1509,967 1513,943 1518,936 1522,952 1526,952 1534,963 1538,963 1542,957 1549,958 1558,970 1565,974 1570,992 1573,970 1577,949 1582,949 1586,946 1589,953 1594,944 1602,944 1606,957 1610,962 1618,997 1624,990 1629,972 1633,984 1647,988 1653,986 1657,955 1662,973 1667,977 1673,959 1677,959 1682,945 1685,943 1689,952 1697,948 1702,963 1709,971 1713,969 1717,975 1721,971 1725,977 1729,997 1733,1002 1738,986 1742,986 1746,989 1758,989 1762,964 1766,978 1770,1001 1773,997 1778,997 1788,984 1793,970 1802,935 1806,955 1809,955 1814,967 1821,974 1829,975 1834,987 1839,988 1844,984 1848,977 1853,967";

// long wicks, keyed by candle x
const highs = { 81: 511, 101: 499, 113: 513, 137: 507, 161: 519, 397: 491, 521: 513, 621: 493, 645: 492, 665: 467, 721: 504, 741: 486, 781: 489, 821: 506, 853: 510, 869: 375, 889: 374, 905: 313, 913: 312, 937: 273, 953: 271, 989: 199, 1069: 179, 1309: 178, 1373: 184, 1237: 188, 1541: 180, 1629: 168, 1657: 154, 1713: 136, 1705: 142, 1801: 121, 1809: 131, 1853: 138 };
const lows = { 201: 541, 265: 558, 273: 560, 505: 549, 557: 577, 561: 581, 577: 571, 581: 571, 689: 559, 697: 559, 789: 541, 793: 542, 813: 558, 837: 558, 861: 543, 877: 468, 881: 449, 885: 430, 893: 407, 917: 351, 973: 313, 981: 267, 1017: 247, 1041: 227, 1357: 228, 1429: 219, 1617: 201, 1665: 198, 1733: 181, 1789: 178, 1837: 172 };

const axes = {
    price: [["1.26670", 128], ["1.26555", 177], ["1.26440", 227], ["1.26325", 276], ["1.26210", 325], ["1.26095", 375], ["1.25980", 424], ["1.25865", 473], ["1.25750", 523], ["1.25635", 572], ["1.26180", 338, "now"]],
    macd: [["0.002337", 603], ["0.00", 780], ["-0.000303", 796]],
    stoch: [["100", 815], ["80", 824], ["20", 872], ["0", 881]],
    cci: [["479.1935", 900], ["100", 958], ["0.00", 975], ["-100", 992], ["-291.7819", 1018]]
};

function parse(text) {
    return text.split(" ").map(p => p.split(",").map(Number));
}

function valueAt(points, x) {
    for (let i = 1; i < points.length; i++) {
        const [x0, y0] = points[i - 1];
        const [x1, y1] = points[i];
        if (x <= x1) return y0 + (y1 - y0) * (x - x0) / (x1 - x0);
    }
    return points[points.length - 1][1];
}

// average over a few bars, takes the corners off the slow lines
function smooth(points) {
    const out = [];
    for (let x = FIRST; x <= LAST + 2; x += STEP) {
        let sum = 0;
        for (let dx = -8; dx <= 8; dx += 4) sum += valueAt(points, Math.max(FIRST, x + dx));
        out.push([x, Math.round(sum / 5 * 10) / 10]);
    }
    return out;
}

function draw(id, tag, cls, attrs) {
    const el = document.createElementNS(NS, tag);
    el.setAttribute("class", cls);
    for (const name in attrs) el.setAttribute(name, attrs[name]);
    document.getElementById(id).appendChild(el);
}

function curve(id, cls, points) {
    draw(id, "path", cls, { d: "M" + points.map(p => p.join(" ")).join("L") });
}

function drawCandles() {
    const points = parse(closes);
    let open = valueAt(points, FIRST) + 3;
    let seed = 7;
    for (let x = FIRST; x <= LAST; x += STEP) {
        const close = Math.round(valueAt(points, x));
        seed = (seed * 73 + 41) % 997;
        const top = Math.min(open, close);
        const bottom = Math.max(open, close, top + 1);
        const high = highs[x] || top - seed % 6;
        const low = lows[x] || bottom + seed % 5;
        const cls = close <= open ? "bull" : "bear";
        draw("price", "line", cls, { x1: x + 0.5, x2: x + 0.5, y1: high, y2: low });
        draw("price", "rect", cls, { x: x - 0.5, y: top + 0.5, width: 2, height: bottom - top });
        open = close;
    }
}

function drawHistogram() {
    const points = parse(hist);
    for (let x = FIRST; x <= LAST; x += STEP) {
        draw("macd", "line", "hist", { x1: x + 0.5, x2: x + 0.5, y1: Math.round(valueAt(points, x)), y2: 781 });
    }
}

function drawStoch() {
    const points = parse(stochK);
    const k = [];
    for (let x = FIRST; x <= LAST; x += STEP) k.push([x, valueAt(points, x)]);
    // %D is the 3 bar average of %K
    const d = k.map((p, i) => {
        const part = k.slice(Math.max(0, i - 2), i + 1);
        return [p[0], part.reduce((sum, q) => sum + q[1], 0) / part.length];
    });
    d[0][1] = 862;
    curve("stoch", "d", d);
    curve("stoch", "k", points);
}

function drawAxis(id) {
    const box = document.getElementById(id).viewBox.baseVal;
    for (const [text, y, cls] of axes[id]) {
        const tick = document.createElement("span");
        tick.className = "tick " + (cls || "");
        tick.textContent = text;
        tick.style.top = (y - box.y) / box.height * 100 + "%";
        document.getElementById(id + "Axis").appendChild(tick);
    }
}

for (const [id, y] of [["stoch", 824.5], ["stoch", 872.5], ["cci", 958.5], ["cci", 992.5]]) {
    draw(id, "line", "level", { x1: 5, x2: 1855, y1: y, y2: y });
}
drawCandles();
curve("price", "ma-fast", smooth(parse(fast)));
curve("price", "ma-slow", smooth(parse(slow)));
drawHistogram();
curve("macd", "signal", smooth(parse(signal)));
drawStoch();
curve("cci", "cci", parse(cci));

for (const id of ["price", "macd", "stoch", "cci"]) {
    for (const x of [65.5, 1201.5]) {
        draw(id, "line", "day", { x1: x, x2: x, y1: 92, y2: 1026 });
    }
    drawAxis(id);
}
```
